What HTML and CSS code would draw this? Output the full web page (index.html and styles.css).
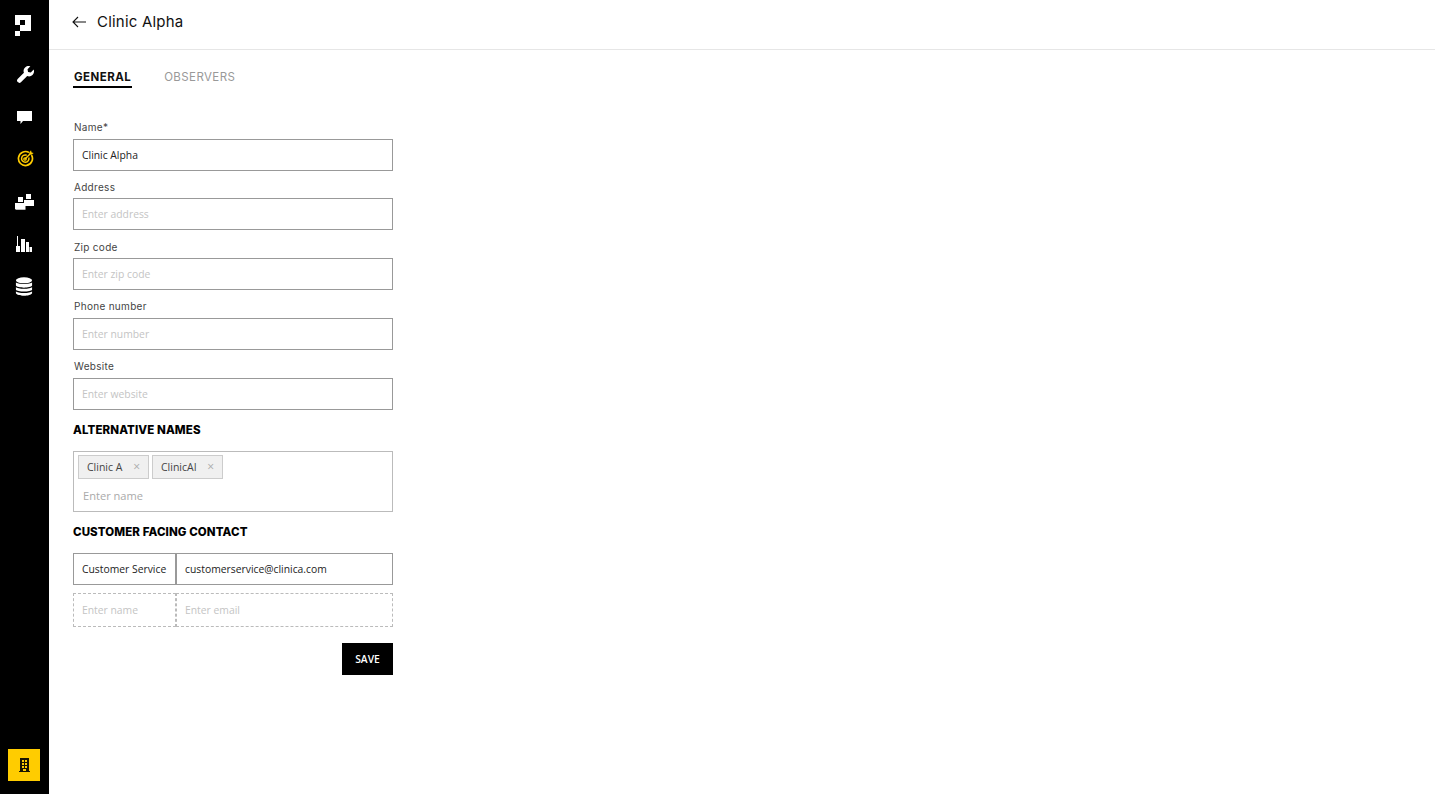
FILE: index.html
```html
<!DOCTYPE html>
<html lang="en">
<head>
<meta charset="utf-8">
<title>Clinic Alpha</title>
<link rel="stylesheet" href="styles.css">
</head>
<body>
<div class="app">
  <nav class="sidebar">
    <svg class="logo" viewBox="0 0 16 21" width="16" height="21"><path fill="#fff" fill-rule="evenodd" d="M0 0H16V16H5V10H0ZM5 5V10H10V5ZM0 16H5V21H0Z"/></svg>
    <svg class="ico wrench" viewBox="0 0 16 16" width="17" height="17"><path fill="#fff" d="M15.700 3.400 13 6.100l-2.600-.5-.5-2.600L12.600.3A4.700 4.700 0 0 0 6.500 6.300L.6 12.200a2.200 2.200 0 0 0 3.100 3.100l5.900-5.900a4.700 4.700 0 0 0 6.100-6z"/></svg>
    <svg class="ico chat" viewBox="0 0 15 13" width="15" height="13"><path fill="#fff" d="M0 0H15V10H6L3.500 13V10H0Z"/></svg>
    <svg class="ico target" viewBox="0 0 17 17" width="17" height="17" fill="none" stroke="#fc0"><path stroke-width="1.700" d="M12 2.500A7 7 0 1 0 14.500 5"/><path stroke-width="1.500" d="M9.700 5.200A3.700 3.700 0 1 0 11.800 7.500"/><circle cx="8" cy="9" r="1.200" stroke-width="1.300"/><path stroke-width="1.400" d="M8 9 13.500 3.500"/><path fill="#fc0" stroke="none" d="M12 3 14 .3 14.600 2.400 16.700 3 14 5Z"/></svg>
    <svg class="ico blocks" viewBox="0 0 19 16" width="19" height="16"><g fill="#fff"><rect x="3" y="3" width="5" height="5"/><rect x="11" y="0" width="5" height="5"/><rect x="9" y="6" width="10" height="6"/><rect x="0" y="9" width="10.500" height="6"/></g><path d="M.5 15.500H10.500" stroke="#bbb"/></svg>
    <svg class="ico bars" viewBox="0 0 16 16" width="16" height="16"><path fill="#fff" d="M0 10H1V0H2V10H4V16H0ZM5 3H9V16H5ZM10 6H13V16H10ZM13.500 11H16V16H13.500Z"/></svg>
    <svg class="ico db" viewBox="0 0 18 20" width="18" height="19"><g fill="#fff"><ellipse cx="9" cy="3.500" rx="8.500" ry="3.200"/><path d="M.5 5.500C2 8 16 8 17.500 5.500V9C16 12 2 12 .5 9ZM.5 10.500C2 13 16 13 17.500 10.500V13.500C16 16 2 16 .5 13.500ZM.5 15C2 17.500 16 17.500 17.500 15V17C16 20.500 2 20.500 .5 17Z"/></g></svg>
    <div class="clinic-badge">
      <svg viewBox="0 0 11 14" width="11" height="14"><path fill="#1a1500" fill-rule="evenodd" d="M1 0H10V13H11V14H0V13H1ZM3 2V4H5V2ZM6 2V4H8V2ZM3 5V7H5V5ZM6 5V7H8V5ZM3 8V10H5V8ZM6 8V10H8V8ZM4 11V13H7V11Z"/></svg>
    </div>
  </nav>
  <main class="main">
    <header class="topbar">
      <svg class="back" viewBox="0 0 14 12" width="14" height="12" fill="none" stroke="#111" stroke-width="1.100"><path d="M14 6H1M6 1 1 6l5 5"/></svg>
      <h1 class="title">Clinic Alpha</h1>
    </header>
    <div class="tabs">
      <span class="tab active">GENERAL</span>
      <span class="tab">OBSERVERS</span>
    </div>
    <form class="form">
      <div class="field"><label class="label">Name*</label><div class="input value">Clinic Alpha</div></div>
      <div class="field"><label class="label">Address</label><div class="input">Enter address</div></div>
      <div class="field"><label class="label">Zip code</label><div class="input">Enter zip code</div></div>
      <div class="field"><label class="label">Phone number</label><div class="input">Enter number</div></div>
      <div class="field"><label class="label">Website</label><div class="input">Enter website</div></div>
      <h2 class="section alt-title">ALTERNATIVE NAMES</h2>
      <div class="tagbox">
        <div class="tags">
          <span class="tag tag-a">Clinic A<span class="x">×</span></span>
          <span class="tag tag-b">ClinicAI<span class="x">×</span></span>
        </div>
        <div class="tag-input">Enter name</div>
      </div>
      <h2 class="section contact-title">CUSTOMER FACING CONTACT</h2>
      <div class="contact">
        <div class="cell c-name value">Customer Service</div>
        <div class="cell c-mail value">customerservice@clinica.com</div>
      </div>
      <div class="contact dashed">
        <div class="cell c-name">Enter name</div>
        <div class="cell c-mail">Enter email</div>
      </div>
      <div class="actions"><button type="button" class="save">SAVE</button></div>
    </form>
  </main>
</div>
</body>
</html>
```
FILE: styles.css
```css
* { box-sizing: border-box; }
html, body { margin: 0; height: 100%; background: #fff; }
body { font-family: "Open Sans", sans-serif; color: #111; overflow: hidden; }
.app { display: flex; height: 794px; }
.sidebar { width: 49px; flex: none; background: #000; display: flex; flex-direction: column; align-items: center; padding: 15px 1px 0 0; }
.sidebar svg { display: block; flex: none; }
.logo { margin-right: 2px; }
.wrench { margin-top: 30px; margin-left: 2px; }
.chat { margin-top: 28px; margin-left: 1px; }
.target { margin-top: 26px; margin-left: 2px; }
.blocks { margin-top: 27px; margin-left: 1px; }
.bars { margin-top: 26px; }
.db { margin-top: 25px; }
.clinic-badge { margin-top: auto; margin-bottom: 13px; width: 32px; height: 32px; background: #fc0; display: flex; align-items: center; justify-content: center; }
.main { flex: 1; min-width: 0; }
.topbar { height: 50px; border-bottom: 1px solid #e6e6e6; display: flex; align-items: center; padding: 0 0 6px 23px; }
.back { display: block; margin-right: 11px; }
.title { margin: 0; font: 400 15px/20px Inter, sans-serif; letter-spacing: .2px; color: #111; }
.tabs { display: flex; gap: 33px; padding: 18px 0 0 25px; }
.tab { font: 400 11.500px/19px Inter, sans-serif; letter-spacing: .4px; color: #999; position: relative; }
.tab.active { font-weight: 700; color: #111; letter-spacing: .45px; }
.tab.active::after { content: ""; position: absolute; left: -1px; right: -1px; bottom: -1px; height: 2px; background: #000; }
.form { width: 320px; margin: 30px 0 0 24px; }
.field { height: 59.8px; }
.label { display: block; font: 400 10px/12px Inter, sans-serif; letter-spacing: .3px; color: #444; padding: 4px 0 0 1px; height: 21.600px; }
.input { height: 32px; border: 1px solid #999; padding: 0 8px; display: flex; align-items: center; font-size: 10.350px; color: #c4c4c4; }
.input.value, .cell.value { color: #222; }
.section { margin: 0; font: 800 11.500px/14px Inter, sans-serif; letter-spacing: .1px; color: #000; }
.alt-title { margin-top: 7px; }
.tagbox { margin-top: 14px; height: 61px; border: 1px solid #bbb; padding: 3px 4px; }
.tags { display: flex; gap: 3px; }
.tag { height: 24px; border: 1px solid #ccc; background: #f0f0f0; display: flex; align-items: center; padding-left: 8px; font-size: 10.500px; color: #444; }
.tag-a { width: 71px; }
.tag-b { width: 71px; }
.x { margin-left: auto; margin-right: 8px; color: #aaa; font-size: 12px; line-height: 1; }
.tag-input { padding: 10px 0 0 5px; font-size: 11.100px; line-height: 14px; color: #aaa; }
.contact-title { margin-top: 13px; }
.contact { display: flex; height: 32px; margin-top: 14px; }
.cell { border: 1px solid #999; display: flex; align-items: center; padding: 0 8px; font-size: 10.350px; white-space: nowrap; color: #c4c4c4; }
.c-name { width: 103px; }
.c-mail { flex: 1; }
.contact.dashed { margin-top: 8px; height: 34px; }
.dashed .cell { border: 1px dashed #bbb; }
.actions { display: flex; justify-content: flex-end; margin-top: 16px; }
.save { width: 51px; height: 32px; border: 0; background: #000; color: #fff; font: 600 10.300px "Open Sans", sans-serif; padding: 0; }
```
